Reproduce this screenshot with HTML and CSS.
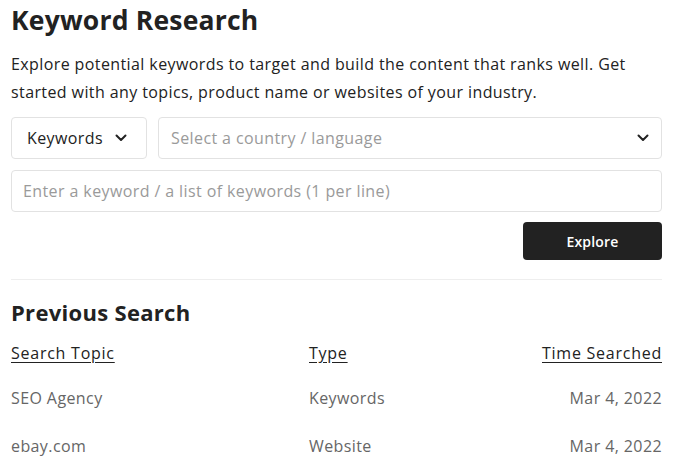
FILE: index.html
```html
<!DOCTYPE html>
<html>
<head>
<meta charset="utf-8">
<link rel="stylesheet" href="styles.css">
</head>
<body>
<div class="page">
  <h1 class="title">Keyword Research</h1>
  <p class="intro">Explore potential keywords to target and build the content that ranks well. Get started with any topics, product name or websites of your industry.</p>
  <div class="row">
    <div class="field type-select">
      <span class="value">Keywords</span>
      <svg class="chev" width="12" height="8" viewBox="0 0 12 8"><path d="M1.5 1.5 6 6l4.5-4.5" fill="none" stroke="#222" stroke-width="2" stroke-linecap="round" stroke-linejoin="round"/></svg>
    </div>
    <div class="field country-select">
      <span class="placeholder">Select a country / language</span>
      <svg class="chev" width="12" height="8" viewBox="0 0 12 8"><path d="M1.5 1.5 6 6l4.5-4.5" fill="none" stroke="#222" stroke-width="2" stroke-linecap="round" stroke-linejoin="round"/></svg>
    </div>
  </div>
  <div class="field keyword-input">
    <span class="placeholder">Enter a keyword / a list of keywords (1 per line)</span>
  </div>
  <div class="actions">
    <button class="btn">Explore</button>
  </div>
  <hr class="divider">
  <h2 class="subtitle">Previous Search</h2>
  <div class="table">
    <div class="trow head">
      <span class="c1">Search Topic</span>
      <span class="c2">Type</span>
      <span class="c3">Time Searched</span>
    </div>
    <div class="trow">
      <span class="c1">SEO Agency</span>
      <span class="c2">Keywords</span>
      <span class="c3">Mar 4, 2022</span>
    </div>
    <div class="trow">
      <span class="c1">ebay.com</span>
      <span class="c2">Website</span>
      <span class="c3">Mar 4, 2022</span>
    </div>
  </div>
</div>
</body>
</html>
```
FILE: styles.css
```css
* { box-sizing: border-box; }
html, body { margin: 0; padding: 0; background: #fff; }
body {
  font-family: "Open Sans", "Liberation Sans", sans-serif;
  color: #222;
  letter-spacing: 0.4px;
}
.page { padding: 0 14px 0 11px; }
.title {
  margin: 0;
  padding-top: 4px;
  font-size: 26.5px;
  line-height: 32px;
  font-weight: 700;
  color: #222;
  letter-spacing: 0.2px;
}
.intro {
  margin: 14px 0 0;
  font-size: 16px;
  line-height: 28px;
  color: #222;
}
.row {
  display: flex;
  gap: 11px;
  margin-top: 11px;
}
.field {
  height: 42px;
  border: 1px solid #e2e2e2;
  border-radius: 4px;
  display: flex;
  align-items: center;
  justify-content: space-between;
  padding: 0 12px 0 15px;
  font-size: 16px;
}
.type-select { width: 136px; flex: none; justify-content: flex-start; gap: 12px; }
.country-select { flex: 1; padding-left: 12px; }
.placeholder { color: #9a9a9a; }
.keyword-input { margin-top: 11px; padding-left: 11px; }
.actions { display: flex; justify-content: flex-end; margin-top: 10px; }
.btn {
  width: 139px;
  height: 38px;
  background: #222;
  color: #fff;
  border: none;
  border-radius: 4px;
  font-family: inherit;
  font-size: 14px;
  font-weight: 600;
  letter-spacing: 0.2px;
}
.divider {
  border: none;
  border-top: 1px solid #eee;
  margin: 19px 0 0;
}
.subtitle {
  margin: 18px 0 0;
  font-size: 22px;
  line-height: 28px;
  font-weight: 700;
  letter-spacing: 0.3px;
}
.table { margin-top: 12px; }
.trow {
  display: grid;
  grid-template-columns: 298px 1fr auto;
  height: 48px;
  align-items: center;
  font-size: 16px;
  color: #666;
}
.trow.head { height: 30px; color: #222; margin-bottom: 6px; letter-spacing: 0.75px; }
.trow.head span { text-decoration: underline; text-underline-offset: 3px; }
.c3 { text-align: right; }
```
